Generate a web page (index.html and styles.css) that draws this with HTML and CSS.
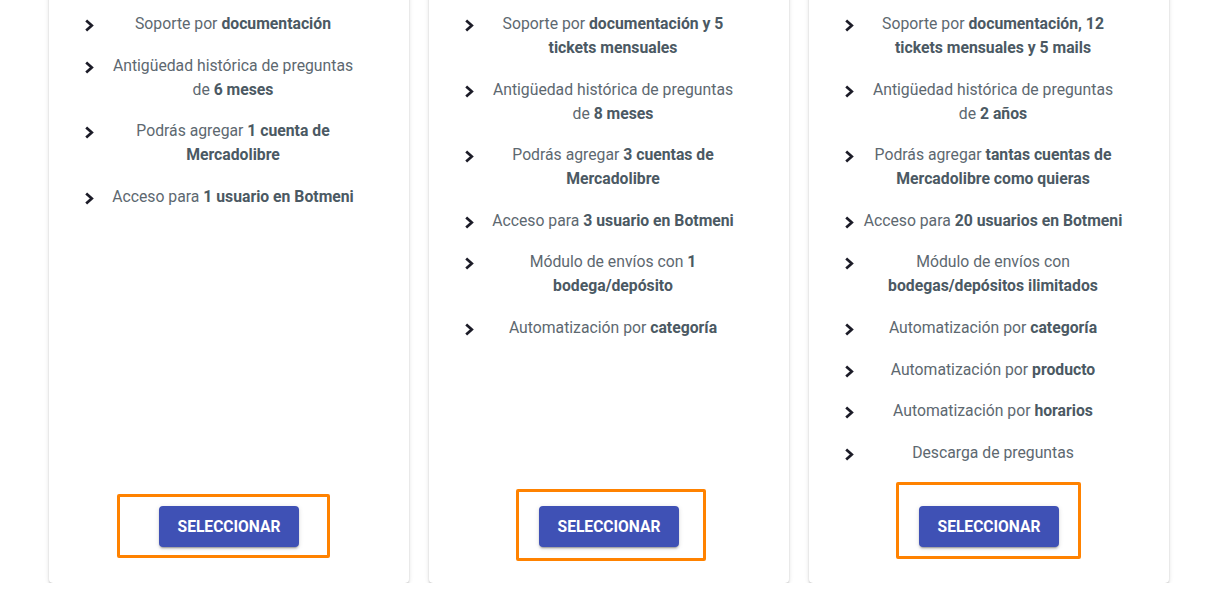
FILE: index.html
```html
<!DOCTYPE html>
<html lang="es">
<head>
<meta charset="utf-8">
<title>Planes</title>
<link rel="stylesheet" href="styles.css">
</head>
<body>
<svg width="0" height="0" class="defs" aria-hidden="true">
  <symbol id="chev" viewBox="0 0 24 24"><path d="M10.2 8.4 L15.8 13.5 L10.2 18.6" fill="none" stroke="currentColor" stroke-width="2.7" stroke-linejoin="miter" stroke-linecap="butt"/></symbol>
</svg>
<main class="cards">
  <section class="card">
    <ul class="features">
      <li><svg class="ico"><use href="#chev"/></svg><span class="txt">Soporte por <b>documentación</b></span></li>
      <li><svg class="ico"><use href="#chev"/></svg><span class="txt">Antigüedad histórica de preguntas de <b>6 meses</b></span></li>
      <li><svg class="ico"><use href="#chev"/></svg><span class="txt">Podrás agregar <b>1 cuenta de Mercadolibre</b></span></li>
      <li><svg class="ico"><use href="#chev"/></svg><span class="txt">Acceso para <b>1 usuario en Botmeni</b></span></li>
    </ul>
    <div class="actions">
      <div class="btn-wrap">
        <span class="mark mark-a"></span>
        <button class="btn">Seleccionar</button>
      </div>
    </div>
  </section>
  <section class="card">
    <ul class="features">
      <li><svg class="ico"><use href="#chev"/></svg><span class="txt">Soporte por <b>documentación y 5 tickets mensuales</b></span></li>
      <li><svg class="ico"><use href="#chev"/></svg><span class="txt">Antigüedad histórica de preguntas de <b>8 meses</b></span></li>
      <li><svg class="ico"><use href="#chev"/></svg><span class="txt">Podrás agregar <b>3 cuentas de Mercadolibre</b></span></li>
      <li><svg class="ico"><use href="#chev"/></svg><span class="txt">Acceso para <b>3 usuario en Botmeni</b></span></li>
      <li><svg class="ico"><use href="#chev"/></svg><span class="txt">Módulo de envíos con <b>1 bodega/depósito</b></span></li>
      <li><svg class="ico"><use href="#chev"/></svg><span class="txt">Automatización por <b>categoría</b></span></li>
    </ul>
    <div class="actions">
      <div class="btn-wrap">
        <span class="mark mark-b"></span>
        <button class="btn">Seleccionar</button>
      </div>
    </div>
  </section>
  <section class="card">
    <ul class="features">
      <li><svg class="ico"><use href="#chev"/></svg><span class="txt">Soporte por <b>documentación, 12 tickets mensuales y 5 mails</b></span></li>
      <li><svg class="ico"><use href="#chev"/></svg><span class="txt">Antigüedad histórica de preguntas de <b>2 años</b></span></li>
      <li><svg class="ico"><use href="#chev"/></svg><span class="txt">Podrás agregar <b>tantas cuentas de Mercadolibre como quieras</b></span></li>
      <li><svg class="ico"><use href="#chev"/></svg><span class="txt">Acceso para <b>20 usuarios en Botmeni</b></span></li>
      <li><svg class="ico"><use href="#chev"/></svg><span class="txt">Módulo de envíos con <b>bodegas/depósitos ilimitados</b></span></li>
      <li><svg class="ico"><use href="#chev"/></svg><span class="txt">Automatización por <b>categoría</b></span></li>
      <li><svg class="ico"><use href="#chev"/></svg><span class="txt">Automatización por <b>producto</b></span></li>
      <li><svg class="ico"><use href="#chev"/></svg><span class="txt">Automatización por <b>horarios</b></span></li>
      <li><svg class="ico"><use href="#chev"/></svg><span class="txt">Descarga de preguntas</span></li>
    </ul>
    <div class="actions">
      <div class="btn-wrap">
        <span class="mark mark-c"></span>
        <button class="btn">Seleccionar</button>
      </div>
    </div>
  </section>
</main>
</body>
</html>
```
FILE: styles.css
```css
* { box-sizing: border-box; }
html, body { margin: 0; padding: 0; background: #fff; }
body {
  font-family: Roboto, "Liberation Sans", Arial, sans-serif;
  overflow: hidden;
}
.defs { position: absolute; width: 0; height: 0; }

.cards {
  display: grid;
  grid-template-columns: repeat(3, 360px);
  gap: 20px;
  margin: -20px 0 0 49px;
}

.card {
  position: relative;
  height: 603px;
  background: #fff;
  border-radius: 4px;
  box-shadow: 0 3px 1px -2px rgba(0,0,0,.2), 0 2px 2px 0 rgba(0,0,0,.14), 0 1px 5px 0 rgba(0,0,0,.12);
  display: flex;
  flex-direction: column;
  padding-top: 32px;
}

.features {
  list-style: none;
  margin: 0;
  padding: 0 46px 0 27px;
}
.features li {
  display: flex;
  align-items: flex-start;
  gap: 3px;
  margin-bottom: 17.6px;
}
.ico {
  flex: 0 0 24px;
  width: 24px;
  height: 24px;
  color: #1c1c28;
}
.txt {
  flex: 1;
  text-align: center;
  font-size: 15.75px;
  line-height: 24px;
  color: #5d6870;
}
.txt b {
  font-weight: 700;
  color: #4b5963;
}

.actions {
  margin-top: auto;
  display: flex;
  justify-content: center;
  padding-bottom: 36px;
}
.btn-wrap { position: relative; }
.btn {
  height: 41px;
  padding: 0 18.5px;
  border: 0;
  border-radius: 4px;
  background: #3f51b5;
  color: #fff;
  font-family: Roboto, "Liberation Sans", Arial, sans-serif;
  font-size: 15.6px;
  font-weight: 700;
  text-transform: uppercase;
  letter-spacing: 0;
  box-shadow: 0 3px 1px -2px rgba(0,0,0,.2), 0 2px 2px 0 rgba(0,0,0,.14), 0 1px 5px 0 rgba(0,0,0,.12);
  cursor: pointer;
}
.mark {
  position: absolute;
  border: 3px solid #ff8200;
  border-radius: 2px;
  pointer-events: none;
}
.mark-a { left: -42px; top: -12px; width: 213px; height: 64px; }
.mark-b { left: -23px; top: -17px; width: 190px; height: 72px; }
.mark-c { left: -23px; top: -24px; width: 185px; height: 77px; }
```
